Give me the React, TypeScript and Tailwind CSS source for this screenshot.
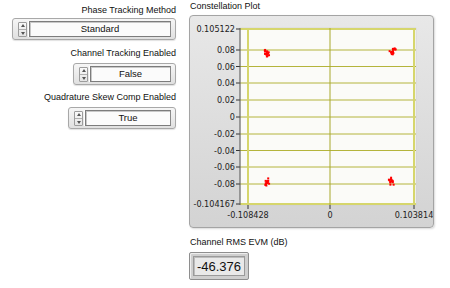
import React from "react";

const FONT = { fontFamily: '"Liberation Sans", Arial, sans-serif' };
const AXIS_FONT = { fontFamily: '"Liberation Sans Narrow", "DejaVu Sans Condensed", sans-serif' };

// LabVIEW style ring control
function Ring({ value, className }: { value: string; className: string }) {
  return (
    <div
      className={`flex h-[22px] items-center gap-[2px] rounded-[3px] border border-[#a8a8a8] bg-gradient-to-b from-[#f6f6f6] to-[#e0e0e0] pl-[5px] pr-[4px] shadow-[0_1px_1px_rgba(0,0,0,0.12)] ${className}`}
    >
      <div className="flex h-[15px] w-[9px] flex-col items-center justify-around rounded-[1px] border border-[#9c9c9c] bg-gradient-to-b from-[#fafafa] to-[#e4e4e4]">
        <span className="h-0 w-0 border-x-[2px] border-b-[3px] border-x-transparent border-b-[#555]" />
        <span className="h-[1px] w-[7px] bg-[#b0b0b0]" />
        <span className="h-0 w-0 border-x-[2px] border-t-[3px] border-x-transparent border-t-[#555]" />
      </div>
      <div className="flex h-[16px] flex-1 items-center justify-center border border-[#7c7c7c] border-r-[#8a8a8a] bg-[#fbfbfb] shadow-[inset_1px_1px_0_#c8c8c8,-1px_0_0_#fff]">
        <span className="text-[9.5px] leading-none text-[#111]">{value}</span>
      </div>
    </div>
  );
}

const yTicks = [
  { v: "0.105122", y: 13 },
  { v: "0.08", y: 34 },
  { v: "0.06", y: 50.5 },
  { v: "0.04", y: 67 },
  { v: "0.02", y: 84 },
  { v: "0", y: 101 },
  { v: "-0.02", y: 118 },
  { v: "-0.04", y: 134.5 },
  { v: "-0.06", y: 151 },
  { v: "-0.08", y: 168 },
  { v: "-0.104167", y: 188 },
];

const xTicks = [
  { v: "-0.108428", x: 58 },
  { v: "0", x: 140 },
  { v: "0.103814", x: 224 },
];

// deterministic little scatter clusters
function cluster(cx: number, cy: number, seed: number) {
  const pts: [number, number][] = [];
  let s = seed;
  for (let i = 0; i < 16; i++) {
    s = (s * 9301 + 49297) % 233280;
    const a = (s / 233280) * Math.PI * 2;
    s = (s * 9301 + 49297) % 233280;
    const r = (s / 233280) * 3.5;
    pts.push([cx + Math.cos(a) * r, cy + Math.sin(a) * r * 1.2]);
  }
  return pts;
}

const clusters = [
  ...cluster(77, 37, 11),
  ...cluster(203, 36, 57),
  ...cluster(77, 166, 101),
  ...cluster(202, 165, 333),
];

function ConstellationPlot() {
  return (
    <svg width={243} height={211} viewBox="0 0 243 211">
      <rect x={50} y={12} width={176} height={177} fill="#fbfbf8" stroke="#c9c9c9" strokeWidth={0.5} />
      {yTicks.map((t, i) => {
        const edge = i === 0 || i === yTicks.length - 1;
        return (
          <g key={t.v}>
            <line
              x1={50}
              x2={226}
              y1={t.y}
              y2={t.y}
              stroke={edge ? "#d6d66c" : "#b4b43c"}
              strokeWidth={edge ? 2 : 1}
            />
            <line x1={46} x2={50} y1={t.y} y2={t.y} stroke="#333" strokeWidth={1} />
            <text x={45} y={t.y + 3} textAnchor="end" fontSize={9} fill="#222" style={AXIS_FONT}>
              {t.v}
            </text>
          </g>
        );
      })}
      {xTicks.map((t, i) => {
        const edge = i !== 1;
        return (
          <g key={t.v}>
            <line
              x1={t.x}
              x2={t.x}
              y1={12}
              y2={189}
              stroke={edge ? "#d6d66c" : "#a8a82c"}
              strokeWidth={edge ? 2 : 1}
            />
            <line x1={t.x} x2={t.x} y1={189} y2={193} stroke="#333" strokeWidth={1} />
            <text x={t.x} y={202} textAnchor="middle" fontSize={9} fill="#222" style={AXIS_FONT}>
              {t.v}
            </text>
          </g>
        );
      })}
      <line x1={50} x2={50} y1={12} y2={189} stroke="#555" strokeWidth={1} />
      {clusters.map(([x, y], i) => (
        <rect key={i} x={x - 1} y={y - 1} width={2} height={2} fill="#ff0000" />
      ))}
    </svg>
  );
}

export default function App() {
  return (
    <div className="h-[288px] w-[450px] overflow-hidden bg-white" style={FONT}>
      <div className="flex">
        {/* Left: ring controls */}
        <div className="flex w-[176px] flex-col items-end pt-[4px]">
          <span className="text-[9px] leading-[12px] text-[#111]">Phase Tracking Method</span>
          <Ring value="Standard" className="mt-[2px] w-[164px]" />
          <span className="mt-[7px] text-[9px] leading-[12px] text-[#111]">Channel Tracking Enabled</span>
          <Ring value="False" className="mt-[4px] w-[103px]" />
          <span className="mt-[6px] text-[9px] leading-[12px] text-[#111]">Quadrature Skew Comp Enabled</span>
          <Ring value="True" className="mt-[4px] w-[108px]" />
        </div>

        {/* Right: graph + indicator */}
        <div className="ml-[13px] flex flex-col">
          <span className="pl-[1px] text-[9px] leading-[12px] text-[#111]">Constellation Plot</span>
          <div className="mt-[3px] h-[213px] w-[245px] rounded-[4px] border border-[#a4a4a4] bg-gradient-to-b from-[#e8e8e8] to-[#d3d3d3] shadow-[1px_1px_2px_rgba(0,0,0,0.15)]">
            <ConstellationPlot />
          </div>

          <span className="mt-[8px] pl-[1px] text-[9px] leading-[12px] text-[#111]">Channel RMS EVM (dB)</span>
          <div className="mt-[4px] flex h-[28px] w-[60px] items-center justify-center rounded-[2px] border border-[#8e8e8e] bg-[#cfcfcf] p-[3px] shadow-[inset_1px_1px_0_#eee]">
            <div className="flex h-full w-full items-center justify-center border border-[#9a9a9a] bg-[#e9e9e9] shadow-[inset_1px_1px_0_#bdbdbd]">
              <span className="text-[13px] leading-none text-[#111]">-46.376</span>
            </div>
          </div>
        </div>
      </div>
    </div>
  );
}
